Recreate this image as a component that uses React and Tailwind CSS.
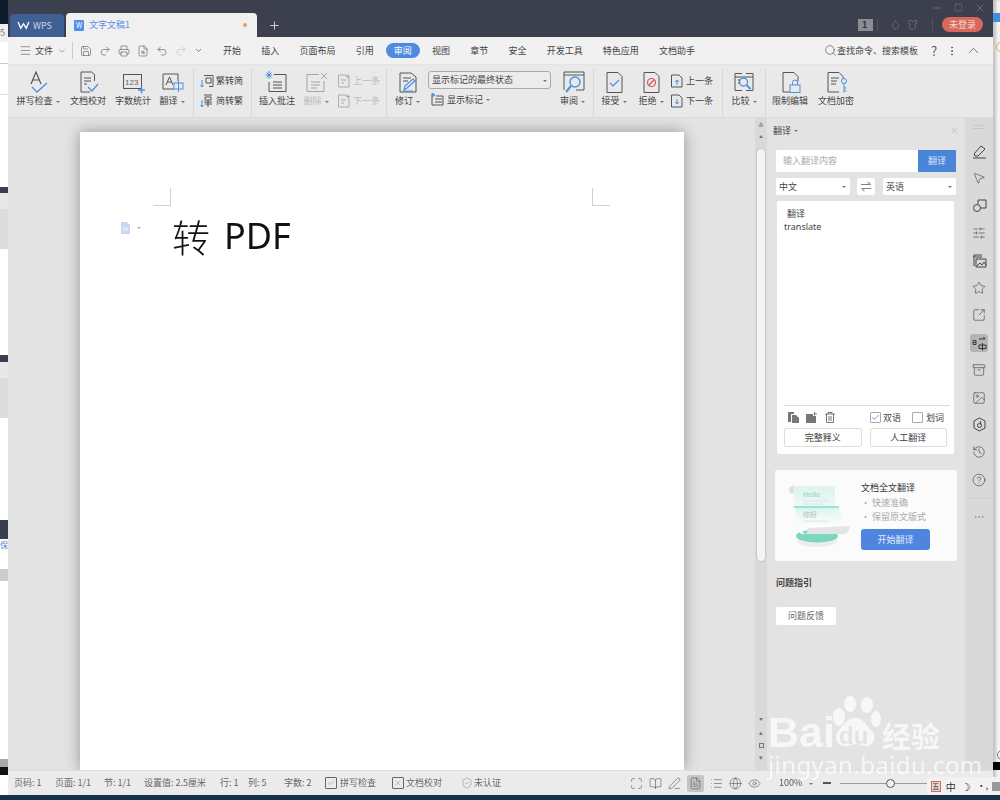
import React from "react";
import {
  Menu, ChevronDown, Save, Printer, FileSearch, Undo2, Redo2, Search, EllipsisVertical, ChevronUp, CircleHelp,
  Minus, Square, X, Plus, MousePointer2, SlidersHorizontal, Star, SquareArrowOutUpRight, Archive, Image, History, Ellipsis,
  Check, Shirt, Maximize, BookOpen, PenLine, FileText, List, Globe, Eye, ShieldCheck, Droplet,
} from "lucide-react";

const S = "#555";
const B = "#4a90e2";

function Ic({ children, w = 24, h = 24 }) {
  return (
    <svg width={w} height={h} viewBox={`0 0 ${w} ${h}`} fill="none" stroke={S} strokeWidth="1">
      {children}
    </svg>
  );
}

const Spell = () => (
  <Ic>
    <path d="M5 14L10 2l5 12M7 10h6" strokeWidth="1.2" />
    <path d="M6 17l5 5 10-9" stroke={B} strokeWidth="1.3" />
  </Ic>
);
const Proof = () => (
  <Ic>
    <path d="M18.500 11V4.500l-3-2.500H5v20h9" />
    <path d="M8 8h7M8 11h7M8 14h3" />
    <path d="M12 17l4 4 6-7" stroke={B} strokeWidth="1.3" />
  </Ic>
);
const Count = () => (
  <Ic>
    <rect x="2.500" y="4.500" width="18" height="14" />
    <text x="4" y="15" fontSize="8" fill="#666" stroke="none" fontFamily="Liberation Sans">123</text>
    <path d="M17 20h7M20.500 16.500v7" stroke={B} strokeWidth="1.4" />
  </Ic>
);
const Trans = () => (
  <Ic>
    <path d="M14 19H3V4h15v7" />
    <path d="M6 15l3.500-8 3.500 8M7.500 12h4" />
    <rect x="14" y="13" width="9" height="6" stroke={B} />
    <path d="M18.500 11v11" stroke={B} />
  </Ic>
);
const Mini = ({ k }) => (
  <svg width="14" height="14" viewBox="0 0 14 14" fill="none" stroke={S} strokeWidth="1">
    {k === "a" ? (
      <>
        <path d="M4 1.500h9v11H9M6 4h5v5H6z" />
        <path d="M2 6v7M0.500 11L2 13l1.500-2" stroke={B} />
      </>
    ) : (
      <>
        <path d="M4 1h8M5 3h6v3H5zM4 8h8M5 10h7M8 6v7" />
        <path d="M2 6v7M0.500 11L2 13l1.500-2" stroke={B} />
      </>
    )}
  </svg>
);
const Comment = () => (
  <Ic>
    <path d="M9 4.500h12v17H4V12" />
    <path d="M8 12h9M8 15h9M8 18h9" />
    <path d="M4 1v8M0.500 5h7M1.500 2.500l5 5M6.500 2.500l-5 5" stroke={B} />
  </Ic>
);
const Del = () => (
  <Ic>
    <g opacity="0.45">
      <path d="M15 4.500H3v17h17V11" />
      <path d="M7 12h9M7 15h9M7 18h6" />
      <path d="M17 3l6 6M23 3l-6 6" />
    </g>
  </Ic>
);
const NavDoc = ({ dir, grey }) => (
  <svg width="14" height="14" viewBox="0 0 14 14" fill="none" stroke={S} strokeWidth="1" opacity={grey ? 0.4 : 1}>
    <path d="M9 1H1.500v12H12V4z" />
    {grey ? (
      <path d="M4 6h5M4 9h3M11 .5v4M9 2.500h4" />
    ) : (
      <path d={dir === "up" ? "M7 11V6M5 8l2-2 2 2" : "M7 5v5M5 8l2 2 2-2"} stroke={B} />
    )}
  </svg>
);
const Revise = () => (
  <Ic>
    <path d="M4 3h11l5 4v15H4z" />
    <path d="M7 8h8M7 11h5" />
    <path d="M8 20l1-4 8-7 2 2-8 7z" stroke={B} strokeWidth="1.2" />
    <path d="M7 21h10" stroke={B} />
  </Ic>
);
const Review = () => (
  <Ic>
    <path d="M3 20V2h20v18h-8M3 5h20" />
    <circle cx="14" cy="12" r="5" stroke={B} strokeWidth="1.4" />
    <path d="M10 16l-5 6" stroke={B} strokeWidth="2" />
  </Ic>
);
const Accept = () => (
  <Ic>
    <path d="M5 2.500h11l4 4v16H5z" />
    <path d="M8 13l3 3 6-6" stroke={B} strokeWidth="1.2" />
  </Ic>
);
const Reject = () => (
  <Ic>
    <path d="M5 2.500h11l4 4v16H5z" />
    <circle cx="12.500" cy="12.500" r="4" stroke="#d9534f" strokeWidth="1.2" />
    <path d="M10 15l5-5" stroke="#d9534f" strokeWidth="1.2" />
  </Ic>
);
const Compare = () => (
  <Ic>
    <path d="M3 3.500h7M14 3.500h7v17h-7M10 20.500H3v-17M3 7h18" />
    <circle cx="11.500" cy="12" r="4" stroke={B} strokeWidth="1.3" />
    <path d="M14.500 15l4 4" stroke={B} strokeWidth="1.8" />
    <path d="M6 10h2M6 13h2" />
  </Ic>
);
const Lock = () => (
  <Ic>
    <path d="M12 22H5V2.500h11l4 4v5" />
    <rect x="12" y="15" width="10" height="7.500" stroke={B} />
    <path d="M14.500 15v-2.500a2.500 2.500 0 015 0V15" stroke={B} />
  </Ic>
);
const KeyDoc = () => (
  <Ic>
    <path d="M15 22H4V2.500h11l4 4v2" />
    <path d="M7 8h8M7 11h6M7 14h5" />
    <circle cx="20" cy="11" r="2.500" stroke={B} />
    <path d="M20 13.500v9M20 18h2.500M20 21h2.500" stroke={B} />
  </Ic>
);

function Caret({ c = "border-t-[#777]" }) {
  return <span className={`ml-[3px] inline-block border-x-[2px] border-t-[2px] border-x-transparent ${c} align-middle`} />;
}

function Big({ w, icon, label, caret, grey }) {
  return (
    <div style={{ width: w }} className="flex shrink-0 flex-col items-center">
      <div className="flex h-[26px] items-center">{icon}</div>
      <div className={`whitespace-nowrap text-[9px] leading-[12px] ${grey ? "text-[#bbb]" : "text-[#444]"}`}>
        {label}
        {caret && <Caret />}
      </div>
    </div>
  );
}

function Mid({ rows, className }) {
  return (
    <div className={`flex shrink-0 flex-col gap-[5px] pt-[4px] ${className}`}>
      {rows.map((r) => (
        <div key={r.t} className={`flex h-[15px] items-center gap-[1px] whitespace-nowrap text-[9px] ${r.grey ? "text-[#bbb]" : "text-[#444]"}`}>
          <span className="w-[15px] shrink-0">{r.i}</span>
          {r.t}
        </div>
      ))}
    </div>
  );
}

const Sep = () => <div className="mx-0 h-[48px] w-px shrink-0 bg-[#d8d8d8]" />;

const tabs = ["开始", "插入", "页面布局", "引用", "审阅", "视图", "章节", "安全", "开发工具", "特色应用", "文档助手"];

function TitleBar() {
  return (
    <div className="flex h-[37px] shrink-0 bg-[#3c3f4d]">
      <div className="flex items-end pl-[2px]">
        <div className="flex h-[23px] w-[54px] items-center gap-[3px] rounded-t-[4px] bg-[#3f6095] pl-[7px] text-[9px] text-[#cfd6e4]">
          <svg width="13" height="9" viewBox="0 0 14 10" fill="none" stroke="#fff" strokeWidth="1.5">
            <path d="M1 1l3 7 3-5 3 5 3-7" />
          </svg>
          WPS
        </div>
        <div className="ml-[2px] flex h-[24px] w-[191px] items-center rounded-t-[4px] bg-[#f0f0f0] pl-[8px] text-[9px] text-[#5a90e0]">
          <span className="mr-[5px] flex h-[11px] w-[10px] items-center justify-center rounded-[1px] bg-[#4f8fef] text-[7px] text-white">W</span>
          文字文稿1
          <span className="ml-auto mr-[10px] size-[4px] rounded-full bg-[#eda24e]" />
        </div>
        <Plus size={13} color="#ddd" strokeWidth={1.6} className="mb-[5px] ml-[11px]" />
      </div>
      <div className="ml-auto flex flex-col items-end pr-[10px]">
        <div className="flex h-[14px] items-center gap-[11px] pr-[-3px] pt-[1px] text-[#999]">
          <Minus size={12} strokeWidth={1} />
          <Square size={9} strokeWidth={1} />
          <X size={12} strokeWidth={1} className="-mr-[3px]" />
        </div>
        <div className="mt-[3px] flex items-center">
          <span className="flex h-[12px] w-[15px] items-center bg-[#8b8d96] pl-[4px] text-[9px] font-bold text-[#333]">1</span>
          <span className="ml-[4px] mr-[12px] h-[12px] w-px bg-[#555]" />
          <Droplet size={11} color="#777" strokeWidth={1.2} />
          <Shirt size={11} color="#888" strokeWidth={1.2} className="ml-[6px]" />
          <span className="ml-[14px] mr-[9px] h-[12px] w-px bg-[#555]" />
          <span className="flex h-[15px] w-[41px] items-center justify-center rounded-full bg-[#d9675a] text-[9px] text-[#f5dcd8]">未登录</span>
        </div>
      </div>
    </div>
  );
}

function MenuRow() {
  const q = { size: 12, color: "#555", strokeWidth: 1.2 };
  return (
    <div className="flex h-[28px] shrink-0 items-center border-b border-[#e4e4e4] bg-[#f1f1f1] text-[9px] text-[#444]">
      <Menu size={13} color="#555" strokeWidth={1.1} className="ml-[11px]" />
      <span className="ml-[3px]">文件</span>
      <ChevronDown size={10} color="#999" className="ml-[4px]" />
      <span className="ml-[5px] h-[17px] w-px bg-[#ccc]" />
      <div className="ml-[7px] flex w-[127px] items-center gap-[7px]">
        <Save {...q} />
        <Undo2 {...q} className="scale-x-[-1]" />
        <Printer {...q} />
        <FileSearch {...q} />
        <Undo2 {...q} />
        <Redo2 {...q} color="#bbb" />
        <ChevronDown size={9} color="#555" />
      </div>
      <div className="ml-[16px] flex items-center gap-[20.200px]">
        {tabs.map((t) => (
          <span key={t} className={t === "审阅" ? "-mx-[8px] rounded-full bg-[#4e8ae0] px-[8px] py-[1px] leading-[13px] text-white" : ""}>
            {t}
          </span>
        ))}
      </div>
      <Search size={13} color="#555" strokeWidth={1.2} className="ml-[129px]" />
      <span className="whitespace-nowrap">查找命令、搜索模板</span>
      <span className="ml-[13px] text-[13px] leading-none text-[#555]">?</span>
      <EllipsisVertical size={12} color="#555" className="ml-[9px]" />
      <ChevronUp size={17} color="#555" strokeWidth={1.1} className="ml-[7px]" />
    </div>
  );
}

function Ribbon() {
  return (
    <div className="flex h-[53px] shrink-0 items-start border-b border-[#dcdcdc] bg-[#e9e9e9] pl-[5px] pt-[4px]">
      <Big w={50} icon={<Spell />} label="拼写检查" caret />
      <Big w={50} icon={<Proof />} label="文档校对" />
      <Big w={40} icon={<Count />} label="字数统计" />
      <Big w={38} icon={<Trans />} label="翻译" caret />
      <div className="w-[2px]" />
      <Sep />
      <Mid className="w-[57px] pl-[6px]" rows={[{ i: <Mini k="a" />, t: "繁转简" }, { i: <Mini k="b" />, t: "简转繁" }]} />
      <Sep />
      <Big w={50} icon={<Comment />} label="插入批注" />
      <Big w={28} icon={<Del />} label="删除" caret grey />
      <Mid className="w-[56px] pl-[7px]" rows={[{ i: <NavDoc grey />, t: "上一条", grey: true }, { i: <NavDoc grey />, t: "下一条", grey: true }]} />
      <Sep />
      <Big w={41} icon={<Revise />} label="修订" caret />
      <div className="flex w-[124px] shrink-0 flex-col pt-[2px]">
        <div className="flex h-[18px] w-[123px] items-center rounded-[3px] border border-[#aaa] bg-[#ececec] pl-[3px] text-[9px] text-[#444]">
          显示标记的最终状态
          <span className="ml-auto mr-[3px]"><Caret /></span>
        </div>
        <div className="mt-[3px] flex h-[15px] items-center pl-[3px] text-[9px] text-[#444]">
          <svg width="13" height="13" viewBox="0 0 13 13" fill="none" stroke={S} className="mr-[3px]">
            <path d="M1 2v10h11V3H5M4 6h7M4 9h7" />
            <path d="M1 0l3 2-3 2z" fill={B} stroke={B} />
          </svg>
          显示标记
          <Caret />
        </div>
      </div>
      <Big w={41} icon={<Review />} label="审阅" caret />
      <Sep />
      <Big w={40} icon={<Accept />} label="接受" caret />
      <Big w={34} icon={<Reject />} label="拒绝" caret />
      <Mid className="w-[54px] pl-[2px]" rows={[{ i: <NavDoc dir="up" />, t: "上一条" }, { i: <NavDoc dir="down" />, t: "下一条" }]} />
      <Sep />
      <Big w={42} icon={<Compare />} label="比较" caret />
      <Sep />
      <div className="w-px" />
      <Big w={46} icon={<Lock />} label="限制编辑" />
      <Big w={46} icon={<KeyDoc />} label="文档加密" />
    </div>
  );
}

function DocArea() {
  return (
    <div className="flex min-h-0 w-[747px] shrink-0 overflow-hidden bg-[#e3e3e3] pl-[72px] pt-[14px]">
      <div className="w-[604px] shrink-0 bg-white px-[73px] pt-[56px] shadow-[0_0_14px_rgba(0,0,0,0.35)]">
        <div className="flex justify-between">
          <div className="size-[18px] border-b border-r border-[#cfcfcf]" />
          <div className="mr-[1px] size-[18px] border-b border-l border-[#cfcfcf]" />
        </div>
        <div className="relative ml-[19px] mt-[5px] flex h-[50px] items-center text-[36px] leading-none text-[#111]">
          <span className="font-['Noto_Sans_CJK_SC',sans-serif] text-[38px] font-light">转</span>
          <span className="ml-[14px] font-['Noto_Sans',sans-serif]">PDF</span>
          <div className="absolute -left-[52px] top-[11px] flex items-center">
            <svg width="11" height="12" viewBox="0 0 11 12" fill="#c7d8f0">
              <path d="M1 0h6l3 3v9H1z" />
              <path d="M3 6h5M3 8h5" stroke="#fff" strokeWidth="0.8" />
            </svg>
            <span className="ml-[3px] flex items-center"><Caret c="border-t-[#aaa]" /></span>
          </div>
        </div>
      </div>
    </div>
  );
}

function ScrollBar() {
  return (
    <div className="flex w-[12px] shrink-0 flex-col items-center bg-[#d9d9d9]">
      <span className="mt-[4px] text-[7px] leading-none text-[#777]">≛</span>
      <span className="mt-[6px] border-x-[2px] border-b-[3px] border-x-transparent border-b-[#777]" />
      <div className="mt-[10px] h-[414px] w-[10px] rounded-[5px] border border-[#c8c8c8] bg-[#f4f4f4]" />
      <span className="mt-[156px] border-x-[2px] border-t-[3px] border-x-transparent border-t-[#777]" />
      <span className="mt-[8px] text-[7px] leading-none text-[#777]">▴</span>
      <div className="mt-[7px] size-[5px] border border-[#777]" />
      <span className="mt-[6px] text-[7px] leading-none text-[#777]">▾</span>
    </div>
  );
}

function Illustration() {
  return (
    <svg width="64" height="66" viewBox="0 0 64 66" className="shrink-0">
      <defs>
        <linearGradient id="g1" x1="0" y1="0" x2="0" y2="1">
          <stop offset="0" stopColor="#dff3ee" />
          <stop offset="1" stopColor="#ffffff" />
        </linearGradient>
        <linearGradient id="g2" x1="0" y1="0" x2="0" y2="1">
          <stop offset="0" stopColor="#c9f0e6" stopOpacity="0.55" />
          <stop offset="1" stopColor="#ffffff" stopOpacity="0.1" />
        </linearGradient>
      </defs>
      <ellipse cx="29" cy="57" rx="20" ry="6" fill="#ececec" />
      <ellipse cx="29" cy="52" rx="21" ry="6.500" fill="#7bd8bf" />
      <path d="M1 5c0-4 8-4 8 0v4H2z" fill="#dcdcdc" />
      <path d="M5 2h42v41H16c-5 0-6 5-6 5C8 30 6 15 5 2z" fill="url(#g1)" />
      <path d="M7 24h44l6 22H12z" fill="url(#g2)" />
      <path d="M6 23h45" stroke="#7fdcc4" strokeWidth="1.4" />
      <text x="15" y="13" fontSize="7" fontWeight="700" fill="#a5dcd0" fontFamily="Liberation Sans">Hello</text>
      <text x="15" y="33" fontSize="7" fill="#aab8b4" fontFamily="Noto Sans CJK SC">你好</text>
      <path d="M15 17h26M15 20h20M15 37h26" stroke="#d5e2df" strokeWidth="0.8" />
      <path d="M14 50c4 1 6-2 6-6l42-2c0 5-3 8-7 8z" fill="#e4e4e7" />
      <path d="M10 41c0 6 2 9 6 9" stroke="#f5f5f5" fill="#fff" />
    </svg>
  );
}

function Panel() {
  return (
    <div className="flex w-[198px] shrink-0 flex-col bg-[#e3e3e3] text-[#444]">
      <div className="flex h-[25px] shrink-0 items-center pl-[6px] pr-[5px] text-[9px]">
        翻译
        <Caret />
        <X size={11} color="#999" strokeWidth={1} className="ml-auto" />
      </div>
      <div className="ml-[9px] mt-[7px] flex h-[22px] w-[180px] text-[9px]">
        <div className="flex flex-1 items-center rounded-l-[2px] bg-white pl-[7px] text-[#aaa]">输入翻译内容</div>
        <div className="flex w-[38px] items-center justify-center rounded-r-[1px] bg-[#4a86d8] text-[#dbe7f8]">翻译</div>
      </div>
      <div className="ml-[9px] mt-[6px] flex h-[17px] w-[180px] items-center text-[9px]">
        <div className="flex h-full w-[74px] items-center rounded-[2px] bg-white pl-[3px]">
          中文
          <span className="ml-auto mr-[4px]"><Caret /></span>
        </div>
        <div className="ml-[7px] flex h-full w-[18px] items-center justify-center rounded-[2px] bg-white text-[11px] text-[#666]">⇌</div>
        <div className="ml-[8px] flex h-full w-[73px] items-center rounded-[2px] bg-white pl-[3px]">
          英语
          <span className="ml-auto mr-[4px]"><Caret /></span>
        </div>
      </div>
      <div className="ml-[10px] mt-[6px] flex h-[253px] w-[177px] flex-col rounded-[2px] bg-white px-[7px] pt-[6px] text-[9px] leading-[13px]">
        <div className="pl-[3px]">翻译</div>
        <div className="font-['Noto_Sans',sans-serif]">translate</div>
        <div className="mt-auto h-px w-[166px] bg-[#ddd]" />
        <div className="mt-[4px] flex h-[14px] items-center">
          <svg width="11" height="11" viewBox="0 0 11 11" fill="#777" className="ml-[4px]">
            <path d="M0 0h6v2H3v8H0zM4 3h4l3 3v5H4z" />
          </svg>
          <svg width="11" height="11" viewBox="0 0 11 11" fill="#777" className="ml-[7px]">
            <path d="M0 2h7v2h3v7H0zM8 0h1v1.500h2v1H9V3.500H8z" />
          </svg>
          <svg width="10" height="11" viewBox="0 0 10 11" fill="none" stroke="#777" className="ml-[8px]">
            <path d="M0 2h10M3 2V.5h4V2M1.500 2v8.500h7V2M4 4v5M6 4v5" />
          </svg>
          <span className="ml-[35px] flex size-[11px] items-center justify-center rounded-[1px] border border-[#aaa]">
            <Check size={9} color={B} strokeWidth={2.2} />
          </span>
          <span className="ml-[2px]">双语</span>
          <span className="ml-[11px] size-[11px] rounded-[1px] border border-[#aaa]" />
          <span className="ml-[3px]">划词</span>
        </div>
        <div className="mt-[4px] flex gap-[8px]">
          <div className="flex h-[19px] w-[78px] items-center justify-center rounded-[2px] border border-[#ddd]">完整释义</div>
          <div className="flex h-[19px] w-[78px] items-center justify-center rounded-[2px] border border-[#ddd]">人工翻译</div>
        </div>
        <div className="h-[7px]" />
      </div>
      <div className="ml-[8px] mt-[16px] flex h-[91px] w-[182px] rounded-[2px] bg-[#fbfbfb] pl-[13px] pt-[14px]">
        <Illustration />
        <div className="-mt-[3px] ml-[9px] text-[9px] leading-[14px]">
          <div className="text-[#333]">文档全文翻译</div>
          <div className="mt-[1px] text-[#aaa]">· 快速准确</div>
          <div className="text-[#aaa]">· 保留原文版式</div>
          <div className="mt-[5px] flex h-[21px] w-[69px] items-center justify-center rounded-[3px] bg-[#4f84e0] text-[#e4edfb]">开始翻译</div>
        </div>
      </div>
      <div className="ml-[9px] mt-[15px] text-[9px] font-bold leading-[13px] text-[#444]">问题指引</div>
      <div className="ml-[9px] mt-[18px] flex h-[18px] w-[60px] items-center justify-center rounded-[2px] bg-white text-[9px] text-[#666]">问题反馈</div>
    </div>
  );
}

const PenIcon = () => (
  <svg width="15" height="15" viewBox="0 0 15 15" fill="none" stroke="#444" strokeWidth="1">
    <path d="M2 10l7-8 4 3-7 7H3zM1 14h13" />
  </svg>
);
const ShapesIcon = () => (
  <svg width="15" height="15" viewBox="0 0 15 15" fill="none" stroke="#444" strokeWidth="1">
    <circle cx="5" cy="10" r="3.500" />
    <path d="M6 6V2h8v8H8.500" />
  </svg>
);
const DocImg = () => (
  <svg width="15" height="15" viewBox="0 0 15 15" fill="none" stroke="#444" strokeWidth="1">
    <path d="M2 13V2h8M1 4h9M4 6h10v8H4zM5 13l3-3 2 2 2-3 2 3" />
  </svg>
);
const TransSide = () => (
  <svg width="16" height="16" viewBox="0 0 16 16" fill="none" stroke="#333" strokeWidth="1">
    <path d="M2 5.500h3v4H2zM2 7.500h3" strokeWidth="0.9" />
    <path d="M8 4h6l-1.500-2M8 10h7v3.500H8zM11.500 8v7.500" />
  </svg>
);
const HexIcon = () => (
  <svg width="15" height="15" viewBox="0 0 15 15" fill="none" stroke="#444" strokeWidth="1">
    <path d="M7.500 1l5.500 3v7l-5.500 3L2 11V4z" />
    <circle cx="7.500" cy="8.500" r="2" />
    <path d="M8 4l1 3" />
  </svg>
);

function SideBar() {
  const p = { size: 14, color: "#444", strokeWidth: 1.1 };
  const items = [
    <PenIcon />, <MousePointer2 {...p} />, <ShapesIcon />, <SlidersHorizontal {...p} />, <DocImg />, <Star {...p} />,
    <SquareArrowOutUpRight {...p} />, <TransSide />, <Archive {...p} />, <Image {...p} />, <HexIcon />, <History {...p} />, <CircleHelp {...p} />,
  ];
  return (
    <div className="flex w-[28px] shrink-0 flex-col items-center bg-[#d9d9d9]">
      <div className="mt-[7px] h-[4px] w-[12px] border-y border-[#c8c8c8]" />
      <div className="mt-[13px] flex flex-col items-center gap-[9.400px]">
        {items.map((it, i) => (
          <div key={i} className={`flex size-[18px] items-center justify-center rounded-[3px] ${i === 7 ? "bg-[#b4b4b4]" : ""}`}>
            {it}
          </div>
        ))}
      </div>
      <div className="mt-[9px] h-px w-[24px] bg-[#cecece]" />
      <Ellipsis size={12} color="#999" className="mt-[12px]" />
    </div>
  );
}

function Status() {
  const p = { size: 12, color: "#666", strokeWidth: 1.1 };
  const v = { size: 13, color: "#555", strokeWidth: 1.1 };
  return (
    <div className="flex h-[25px] shrink-0 items-center border-t border-[#dcdcdc] bg-[#ebebeb] text-[9px] text-[#666]">
      <div className="ml-[6px] w-[38px]">页码: 1</div>
      <div className="ml-[3px] w-[49px]">页面: 1/1</div>
      <div className="w-[40px]">节: 1/1</div>
      <div className="w-[76px]">设置值: 2.5厘米</div>
      <div className="w-[28px]">行: 1</div>
      <div className="w-[36px]">列: 5</div>
      <div className="w-[41px]">字数: 2</div>
      <Check {...p} className="rounded-[1px] border border-[#666] p-px" />
      <span className="ml-[3px] w-[52px]">拼写检查</span>
      <X {...p} className="rounded-[1px] border border-[#666] p-px" />
      <span className="ml-[2px] w-[55px]">文档校对</span>
      <ShieldCheck {...p} color="#888" />
      <span className="ml-[1px] w-[30px]">未认证</span>
      <div className="ml-[126px] flex items-center gap-[6px]">
        <Maximize {...v} />
        <BookOpen {...v} />
        <PenLine {...v} />
        <span className="flex size-[17px] items-center justify-center rounded-[2px] bg-[#c4c4c4]"><FileText {...v} /></span>
        <List {...v} />
        <Globe {...v} />
        <Eye {...v} />
      </div>
      <span className="ml-[18px] text-[#555]">100%</span>
      <span className="ml-[4px]"><Caret /></span>
      <span className="ml-[10px] h-[2px] w-[8px] bg-[#555]" />
      <div className="relative ml-[9px] h-px w-[112px] bg-[#999]">
        <span className="absolute -top-[4px] left-[46px] size-[9px] rounded-full border border-[#555] bg-[#f2f2f2]" />
      </div>
    </div>
  );
}

function LeftStrip() {
  return (
    <div className="flex w-[8px] shrink-0 flex-col overflow-hidden bg-white">
      <div className="h-[24px] bg-[#0b1a2c]" />
      <div className="h-[18px] bg-[#f0f0f0] text-[9px] leading-[18px] text-[#777]">5</div>
      <div className="h-[22px] border-b border-[#ccc]" />
      <div className="h-[31px] border-b border-[#ddd]" />
      <div className="h-[92px]" />
      <div className="h-[6px] bg-[#3a3f50]" />
      <div className="h-[16px] bg-[#e8e8e8]" />
      <div className="h-[40px] bg-[#dcdcdc]" />
      <div className="h-[106px]" />
      <div className="h-[7px] bg-[#3a3f50]" />
      <div className="h-[16px] bg-[#e8e8e8]" />
      <div className="h-[40px] bg-[#dcdcdc]" />
      <div className="h-[102px]" />
      <div className="h-[19px] bg-[#3a3f50]" />
      <div className="h-[30px] text-[8px] text-[#4a86d8]">保</div>
      <div className="h-[12px] bg-[#ccc]" />
      <div className="h-[178px]" />
      <div className="h-[8px] bg-[#aaa]" />
      <div className="h-[8px] bg-[#111]" />
    </div>
  );
}

function RightStrip() {
  return (
    <div className="flex w-[7px] shrink-0 flex-col bg-[#f4f4f4] shadow-[inset_3px_0_3px_rgba(0,0,0,0.2)]">
      <div className="mt-[13px] h-[9px] bg-[#3f8fe0]" />
      <div className="ml-[3px] mt-[20px] size-[10px] rounded-full border border-[#e8a33d]" />
      <div className="ml-[4px] mt-[698px] size-[10px] rounded-full border border-[#777]" />
      <div className="mt-[2px] h-[8px] bg-[#000]" />
    </div>
  );
}

function Watermark() {
  return (
    <div className="pointer-events-none absolute left-[766px] top-[692px] h-[90px] w-[190px] text-white/70">
      <div className="absolute left-[2px] top-[15px] font-['Liberation_Sans',sans-serif] text-[43px] font-bold leading-[50px]">Bai</div>
      <svg width="60" height="62" viewBox="0 0 60 62" className="absolute left-[64px] top-[4px]" fill="#ffffff" fillOpacity="0.7">
        <ellipse cx="9" cy="21" rx="6" ry="9" />
        <ellipse cx="20" cy="8" rx="6" ry="8" />
        <ellipse cx="37" cy="9" rx="6" ry="8" />
        <ellipse cx="46" cy="23" rx="5" ry="8" />
        <path d="M26 22c8 0 10 8 16 13 6 6 1 15-6 15-4 0-6-2-10-2s-7 3-12 2c-8-1-10-9-6-15 5-5 8-13 18-13z" />
      </svg>
      <div className="absolute left-[73px] top-[29px] font-['Liberation_Sans',sans-serif] text-[24px] font-bold leading-[30px] text-[#e3e3e3]">du</div>
      <div className="absolute left-[116px] top-[26px] text-[29px] font-bold leading-[34px]">经验</div>
      <div className="absolute left-[2px] top-[59px] whitespace-nowrap font-['Noto_Sans',sans-serif] text-[24px] leading-[28px] tracking-[0.4px]">jingyan.baidu.com</div>
    </div>
  );
}

function Ime() {
  return (
    <div className="absolute left-[927px] top-[777px] flex h-[18px] w-[73px] items-center bg-[#f2f2f2] pl-[4px] text-[10px] text-[#333]">
      <span className="flex size-[11px] items-center justify-center border border-[#d9675a] bg-[#e8d5d0] text-[7px]">五</span>
      <span className="ml-[5px]">中</span>
      <span className="ml-[5px] text-[11px]">☽</span>
      <span className="ml-[6px] text-[9px]">·,</span>
      <span className="ml-[4px] size-[9px] bg-[#999]" />
    </div>
  );
}

export default function App() {
  return (
    <div className="relative flex h-[800px] w-[1000px] flex-col overflow-hidden font-['Noto_Sans_CJK_SC','Noto_Sans',sans-serif] blur-[0.4px]">
      <div className="flex min-h-0 flex-1">
        <LeftStrip />
        <div className="flex w-[985px] shrink-0 flex-col">
          <TitleBar />
          <MenuRow />
          <Ribbon />
          <div className="flex min-h-0 flex-1">
            <DocArea />
            <ScrollBar />
            <Panel />
            <SideBar />
          </div>
          <Status />
        </div>
        <RightStrip />
      </div>
      <div className="h-[5px] shrink-0 bg-[#16324a]" />
      <Watermark />
      <Ime />
    </div>
  );
}
